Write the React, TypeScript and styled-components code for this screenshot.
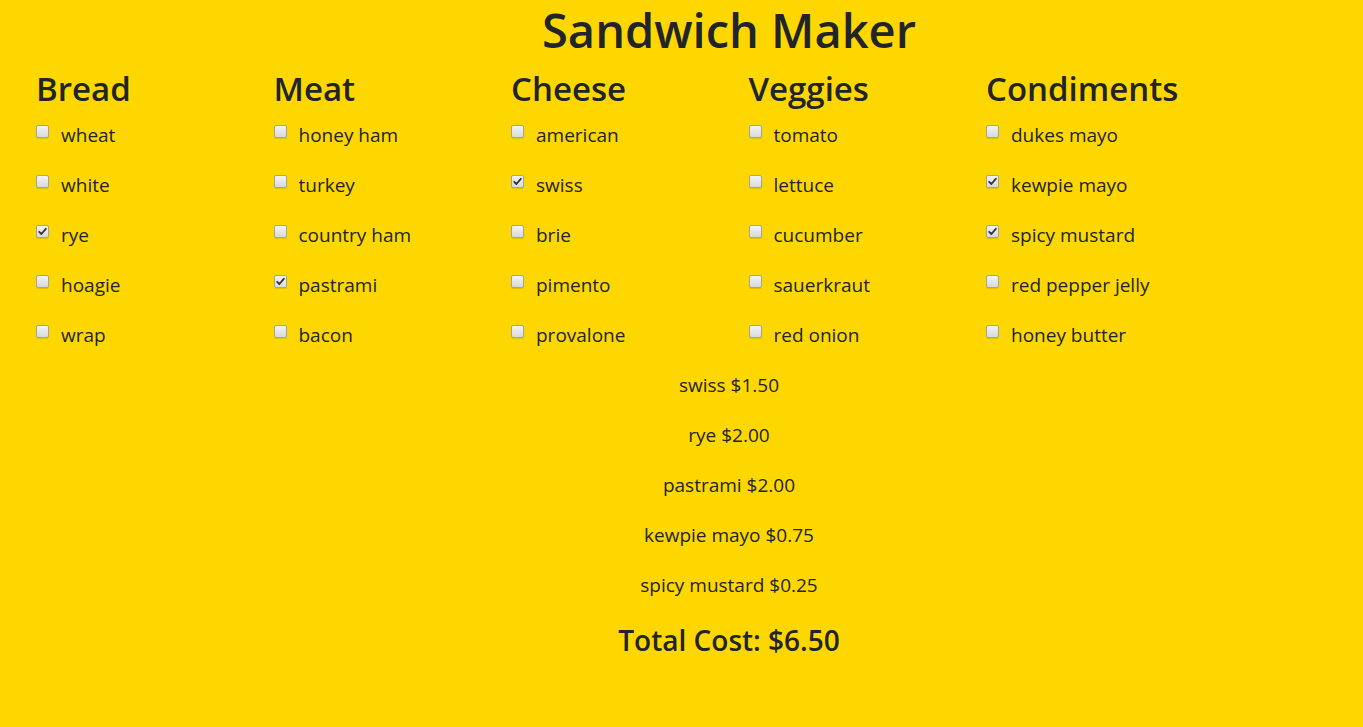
import React, { useState } from "react"
import styled, { createGlobalStyle } from "styled-components"

const GlobalStyle = createGlobalStyle`
  html, body {
    margin: 0;
    padding: 0;
    background: #ffd700;
  }
  body {
    font-family: "Open Sans", "Noto Sans", sans-serif;
    color: #212529;
  }
`

const Page = styled.div`
  width: 1363px;
  min-height: 727px;
  box-sizing: border-box;
  background: #ffd700;
`

const Centered = styled.div`
  box-sizing: border-box;
  padding-left: 95px;
  text-align: center;
`

const Title = styled.h1`
  margin: 0;
  font-size: 47px;
  font-weight: 600;
  line-height: 60px;
`

const Columns = styled.div`
  display: grid;
  grid-template-columns: repeat(5, 237.5px);
  padding-left: 36px;
`

const Column = styled.div`
  display: flex;
  flex-direction: column;
`

const Heading = styled.h2`
  margin: 5px 0 7px;
  font-size: 33px;
  font-weight: 600;
  line-height: 48px;
`

const Row = styled.label`
  display: flex;
  align-items: flex-start;
  height: 50px;
  font-size: 19px;
  line-height: 30px;
  cursor: pointer;
`

const HiddenInput = styled.input`
  position: absolute;
  opacity: 0;
  width: 0;
  height: 0;
`

const Box = styled.span`
  box-sizing: border-box;
  width: 13px;
  height: 13px;
  margin: 5px 12px 0 0;
  border: 1px solid #a3a3a3;
  border-radius: 2px;
  background: linear-gradient(#f4f4f4, #d8d8d8);
  box-shadow: 0 1px 1px rgba(0, 0, 0, 0.12);
  display: flex;
  align-items: center;
  justify-content: center;
`

const Line = styled.div`
  height: 50px;
  font-size: 19px;
  line-height: 30px;
`

const Total = styled.h3`
  margin: 0;
  font-size: 28px;
  font-weight: 600;
  line-height: 40px;
`

type Group = { name: string; items: [string, number][] }

const groups: Group[] = [
  { name: "Bread", items: [["wheat", 1.5], ["white", 1.5], ["rye", 2], ["hoagie", 2.5], ["wrap", 1.75]] },
  { name: "Meat", items: [["honey ham", 2.5], ["turkey", 2.25], ["country ham", 2.75], ["pastrami", 2], ["bacon", 1.5]] },
  { name: "Cheese", items: [["american", 1], ["swiss", 1.5], ["brie", 2], ["pimento", 1.25], ["provalone", 1.25]] },
  { name: "Veggies", items: [["tomato", 0.5], ["lettuce", 0.25], ["cucumber", 0.5], ["sauerkraut", 0.75], ["red onion", 0.25]] },
  { name: "Condiments", items: [["dukes mayo", 0.5], ["kewpie mayo", 0.75], ["spicy mustard", 0.25], ["red pepper jelly", 1], ["honey butter", 0.75]] },
]

const prices: Record<string, number> = {}
groups.forEach((g) => g.items.forEach(([n, p]) => (prices[n] = p)))

const Check = () => (
  <svg width="9" height="9" viewBox="0 0 9 9">
    <path d="M1.2 4.8 L3.4 7 L7.8 1.8" fill="none" stroke="#333" strokeWidth="1.8" strokeLinecap="round" strokeLinejoin="round" />
  </svg>
)

export default function App() {
  const [chosen, setChosen] = useState<string[]>(["swiss", "rye", "pastrami", "kewpie mayo", "spicy mustard"])

  const toggle = (name: string) => {
    setChosen((c) => (c.includes(name) ? c.filter((x) => x !== name) : [...c, name]))
  }

  const total = chosen.reduce((sum, n) => sum + prices[n], 0)

  return (
    <Page>
      <GlobalStyle />
      <Centered>
        <Title>Sandwich Maker</Title>
      </Centered>
      <Columns>
        {groups.map((g) => (
          <Column key={g.name}>
            <Heading>{g.name}</Heading>
            {g.items.map(([n]) => (
              <Row key={n}>
                <HiddenInput type="checkbox" checked={chosen.includes(n)} onChange={() => toggle(n)} />
                <Box>{chosen.includes(n) && <Check />}</Box>
                {n}
              </Row>
            ))}
          </Column>
        ))}
      </Columns>
      <Centered>
        {chosen.map((n) => (
          <Line key={n}>
            {n} ${prices[n].toFixed(2)}
          </Line>
        ))}
        <Total>Total Cost: ${total.toFixed(2)}</Total>
      </Centered>
    </Page>
  )
}
